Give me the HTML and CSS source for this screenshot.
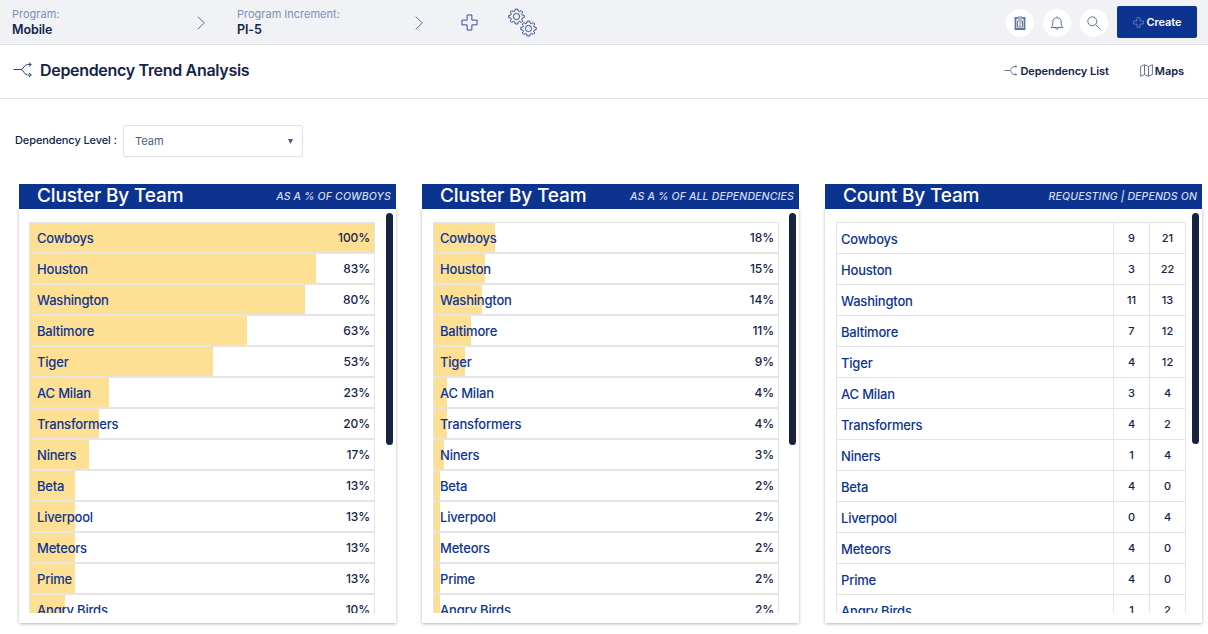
FILE: index.html
```html
<!DOCTYPE html>
<html lang="en">
<head>
<meta charset="utf-8">
<title>Dependency Trend Analysis</title>
<link rel="stylesheet" href="styles.css">
</head>
<body>
<svg class="defs" width="0" height="0" aria-hidden="true">
<symbol id="branch" viewBox="0 0 20 16"><path d="M0.500 7.500H8M8 7.500C10.500 7.500 11 2.500 14.500 2.500H18M8 7.500C10.500 7.500 11 13 14.500 13H18M16 .5L18.300 2.500L16 4.500M16 11L18.300 13L16 15"/></symbol>
<symbol id="gear" viewBox="0 0 18 18"><path d="M7.600 1.200H10.400L10.800 3.300L12.300 3.900L14 2.700L15.600 4.300L14.500 6L15.200 7.500L17.200 7.900V10.200L15.200 10.600L14.500 12.100L15.600 13.800L14 15.400L12.300 14.200L10.800 14.900L10.400 16.900H7.600L7.200 14.900L5.700 14.200L4 15.400L2.400 13.800L3.500 12.100L2.900 10.600L.8 10.200V7.900L2.900 7.500L3.500 6L2.400 4.300L4 2.700L5.700 3.900L7.200 3.300Z"/><circle cx="9" cy="9" r="3.300"/></symbol>
<symbol id="plus" viewBox="0 0 18 18"><path d="M6.500 1H11.500V6.500H17V11.500H11.500V17H6.500V11.500H1V6.500H6.500Z"/></symbol>
</svg>
<header class="topbar">
  <div class="crumb crumb-program"><span class="crumb-label">Program:</span><strong>Mobile</strong></div>
  <svg class="chevron" viewBox="0 0 8 14"><path d="M.7 .7L7.300 7L.7 13.300"/></svg>
  <div class="crumb crumb-pi"><span class="crumb-label">Program Increment:</span><strong>PI-5</strong></div>
  <svg class="chevron" viewBox="0 0 8 14"><path d="M.7 .7L7.300 7L.7 13.300"/></svg>
  <svg class="add"><use href="#plus"/></svg>
  <svg class="gears" viewBox="0 0 30 30"><use href="#gear" x="0" y="0" width="17" height="17"/><use href="#gear" x="12" y="12" width="17" height="17"/></svg>
  <div class="actions">
    <span class="round"><svg viewBox="0 0 12 14" width="12" height="14"><path class="board" d="M3.500 2H1.500V13H10.500V2H8.500"/><path d="M4 1H8V3H4ZM3.500 5H8.500V11H3.500ZM5 7H7.500M5 9H7"/></svg></span>
    <span class="round"><svg viewBox="0 0 14 14" width="14" height="14"><path d="M7 .5V1.500M1 11.500C2.500 10 2.800 9 2.800 6C2.800 3.200 4.500 1.700 7 1.700S11.200 3.200 11.200 6C11.200 9 11.500 10 13 11.500ZM5.500 11.500C5.500 13.800 8.500 13.800 8.500 11.500"/></svg></span>
    <span class="round"><svg viewBox="0 0 14 14" width="14" height="14"><circle cx="5.300" cy="5.300" r="4.500"/><path d="M8.600 8.600L13.500 13.500"/></svg></span>
    <button class="create"><svg width="11" height="11"><use href="#plus"/></svg>Create</button>
  </div>
</header>
<div class="titlebar">
  <svg class="title-icon"><use href="#branch"/></svg>
  <h1>Dependency Trend Analysis</h1>
  <a class="link link-list"><svg width="14" height="11" viewBox="0 0 14 11"><path d="M.5 5.500H5.500C7.500 5.500 7.500 1.500 10 1.500H12.500M5.500 5.500C7.500 5.500 7.500 9.500 10 9.500H12.500M11.500 .3L12.800 1.500L11.500 2.700M11.500 8.300L12.800 9.500L11.500 10.700"/></svg>Dependency List</a>
  <a class="link link-maps"><svg width="13" height="13" viewBox="0 0 13 13"><path d="M.6 2.500L4.500 .7L8.500 2.500L12.400 .7V10.500L8.500 12.300L4.500 10.500L.6 12.300ZM4.500 .7V10.500M8.500 2.500V12.300"/></svg>Maps</a>
</div>
<div class="filter"><span class="filter-label">Dependency Level :</span><div class="select"><span>Team</span><svg width="5" height="5"><path d="M0 0H5L2.500 5Z"/></svg></div></div>
<main class="panels">
  <section class="panel">
    <div class="panel-head"><h2>Cluster By Team</h2><em>AS A % OF COWBOYS</em></div>
    <div class="panel-body"><div class="list">
      <div class="row"><i style="width:100%"></i><span>Cowboys</span><b>100%</b></div>
      <div class="row"><i style="width:83.200%"></i><span>Houston</span><b>83%</b></div>
      <div class="row"><i style="width:80%"></i><span>Washington</span><b>80%</b></div>
      <div class="row"><i style="width:63%"></i><span>Baltimore</span><b>63%</b></div>
      <div class="row"><i style="width:53.200%"></i><span>Tiger</span><b>53%</b></div>
      <div class="row"><i style="width:23%"></i><span>AC Milan</span><b>23%</b></div>
      <div class="row"><i style="width:20%"></i><span>Transformers</span><b>20%</b></div>
      <div class="row"><i style="width:17.200%"></i><span>Niners</span><b>17%</b></div>
      <div class="row"><i style="width:13.100%"></i><span>Beta</span><b>13%</b></div>
      <div class="row"><i style="width:13.100%"></i><span>Liverpool</span><b>13%</b></div>
      <div class="row"><i style="width:13.100%"></i><span>Meteors</span><b>13%</b></div>
      <div class="row"><i style="width:13.100%"></i><span>Prime</span><b>13%</b></div>
      <div class="row"><i style="width:10.200%"></i><span>Angry Birds</span><b>10%</b></div>
    </div><div class="scroll"></div></div>
  </section>
  <section class="panel">
    <div class="panel-head"><h2>Cluster By Team</h2><em>AS A % OF ALL DEPENDENCIES</em></div>
    <div class="panel-body"><div class="list list-all">
      <div class="row"><i style="width:17.800%"></i><span>Cowboys</span><b>18%</b></div>
      <div class="row"><i style="width:14.900%"></i><span>Houston</span><b>15%</b></div>
      <div class="row"><i style="width:14%"></i><span>Washington</span><b>14%</b></div>
      <div class="row"><i style="width:10.800%"></i><span>Baltimore</span><b>11%</b></div>
      <div class="row"><i style="width:9%"></i><span>Tiger</span><b>9%</b></div>
      <div class="row"><i style="width:3.800%"></i><span>AC Milan</span><b>4%</b></div>
      <div class="row"><i style="width:3.800%"></i><span>Transformers</span><b>4%</b></div>
      <div class="row"><i style="width:2.900%"></i><span>Niners</span><b>3%</b></div>
      <div class="row"><i style="width:1.800%"></i><span>Beta</span><b>2%</b></div>
      <div class="row"><i style="width:1.800%"></i><span>Liverpool</span><b>2%</b></div>
      <div class="row"><i style="width:1.800%"></i><span>Meteors</span><b>2%</b></div>
      <div class="row"><i style="width:1.800%"></i><span>Prime</span><b>2%</b></div>
      <div class="row"><i style="width:1.800%"></i><span>Angry Birds</span><b>2%</b></div>
    </div><div class="scroll"></div></div>
  </section>
  <section class="panel">
    <div class="panel-head"><h2>Count By Team</h2><em>REQUESTING | DEPENDS ON</em></div>
    <div class="panel-body"><div class="list counts">
      <div class="count"><span>Cowboys</span><b>9</b><b>21</b></div>
      <div class="count"><span>Houston</span><b>3</b><b>22</b></div>
      <div class="count"><span>Washington</span><b>11</b><b>13</b></div>
      <div class="count"><span>Baltimore</span><b>7</b><b>12</b></div>
      <div class="count"><span>Tiger</span><b>4</b><b>12</b></div>
      <div class="count"><span>AC Milan</span><b>3</b><b>4</b></div>
      <div class="count"><span>Transformers</span><b>4</b><b>2</b></div>
      <div class="count"><span>Niners</span><b>1</b><b>4</b></div>
      <div class="count"><span>Beta</span><b>4</b><b>0</b></div>
      <div class="count"><span>Liverpool</span><b>0</b><b>4</b></div>
      <div class="count"><span>Meteors</span><b>4</b><b>0</b></div>
      <div class="count"><span>Prime</span><b>4</b><b>0</b></div>
      <div class="count"><span>Angry Birds</span><b>1</b><b>2</b></div>
    </div><div class="scroll"></div></div>
  </section>
</main>
</body>
</html>
```
FILE: styles.css
```css
* { box-sizing: border-box; }
body { margin: 0; width: 1208px; height: 634px; overflow: hidden; background: #fff; color: #14234a; font-family: Inter, "Liberation Sans", sans-serif; }
h1, h2 { margin: 0; }
svg { flex: none; fill: none; stroke: #61779f; stroke-width: 1; }
.defs { position: absolute; }
.topbar { height: 45px; background: #f1f2f5; border-bottom: 1px solid #e0e1e4; display: flex; align-items: center; padding: 1px 11px 0 12px; }
.crumb { display: flex; flex-direction: column; font-size: 13px; line-height: 16px; padding-bottom: 1px; }
.crumb-label { font-size: 11px; color: #7d8fb5; letter-spacing: 0; }
.crumb strong { font-weight: 600; font-size: 12.500px; letter-spacing: -.1px; }
.crumb-program { width: 185px; }
.crumb-pi { width: 178px; }
.chevron { width: 8px; height: 14px; margin-right: 32px; }
.crumb-pi + .chevron { margin-right: 38px; }
.add { width: 17px; height: 17px; margin-right: 30px; stroke: #294890; }
.gears { width: 30px; height: 30px; stroke: #294890; }
.actions { margin-left: auto; display: flex; align-items: center; gap: 9px; }
.round { width: 28px; height: 28px; border-radius: 50%; background: #fff; display: flex; align-items: center; justify-content: center; }
.board { stroke-width: 1.800; }
.create { width: 80px; height: 32px; border: 0; border-radius: 2px; background: #0d3391; color: #fff; font: 600 11px Inter, sans-serif; letter-spacing: -.1px; display: flex; align-items: center; justify-content: center; gap: 3px; padding: 0; margin-top: -1px; }
.create svg { stroke: #8ea1ce; }
.titlebar { height: 54px; border-bottom: 1px solid #e0e1e4; display: flex; align-items: center; padding: 0 24px 2px 13px; }
.title-icon { width: 20px; height: 16px; margin-right: 7px; margin-top: -2px; stroke: #254382; }
h1 { font-size: 16px; font-weight: 600; line-height: 20px; letter-spacing: -.31px; margin-top: -1px; }
.link { display: flex; align-items: center; gap: 2px; font-size: 11px; font-weight: 600; letter-spacing: -.05px; }
.link-list { margin-left: auto; margin-right: 31px; }
.filter { height: 85px; padding: 26px 0 0 15px; display: flex; align-items: flex-start; }
.filter-label { width: 108px; font-size: 11px; font-weight: 500; line-height: 31px; letter-spacing: -.1px; white-space: nowrap; }
.select { width: 180px; height: 32px; border: 1px solid #dfe1e5; border-radius: 2px; display: flex; align-items: center; justify-content: space-between; padding: 0 9px 0 11px; color: #4b5d84; font-size: 11px; }
.select svg { fill: #4b5d84; stroke: none; }
.panels { display: flex; gap: 26px; padding-left: 19px; }
.panel { width: 377px; flex: none; }
.panel-head { height: 25px; background: #0d3391; color: #fff; display: flex; align-items: center; justify-content: space-between; padding: 0 5px 1px 18px; }
h2 { font-size: 19px; line-height: 24px; font-weight: 500; letter-spacing: -.15px; }
.panel-head em { font-size: 10.500px; color: #d5dcec; letter-spacing: .15px; font-weight: 500; }
.panel-body { height: 414px; display: flex; align-items: flex-start; padding: 4px 3px 0 10px; box-shadow: 0 1px 3px rgba(35,45,75,.35); }
.list { width: 346px; height: 391px; margin-top: 9px; overflow: hidden; }
.list-all { margin-left: 1px; }
.list-all + .scroll { margin-left: 10px; }
.row { height: 31px; border: 1px solid #e4e4e5; display: grid; grid-template-columns: 1fr auto; align-items: center; padding-right: 4px; position: relative; font-size: 13px; line-height: 20px; }
.row i { position: absolute; left: 0; top: 0; bottom: 0; background: #fde094; }
.row span { position: relative; padding: 1px 0 0 7px; color: #0d3391; font-weight: 500; letter-spacing: -.2px; }
.list-all .row span { padding-left: 6px; }
.row b { position: relative; font-size: 12px; font-weight: 500; letter-spacing: -.1px; padding-top: 1px; }
.scroll { width: 7px; height: 232px; margin-left: 11px; border-radius: 4px; background: #172340; }
.counts { width: 350px; margin-left: 1px; border-top: 1px solid #e4e4e5; }
.counts + .scroll { margin-left: 6px; height: 231px; }
.count { height: 31px; display: grid; grid-template-columns: 278px 36px 36px; line-height: 30px; font-size: 13px; border-bottom: 1px solid #e4e4e5; }
.count span { border-left: 1px solid #e4e4e5; border-right: 1px solid #e4e4e5; padding: 1px 0 0 4px; color: #0d3391; height: 30px; font-weight: 500; letter-spacing: -.2px; }
.count b { border-right: 1px solid #e4e4e5; font-size: 11px; font-weight: 500; text-align: center; height: 30px; }
```
